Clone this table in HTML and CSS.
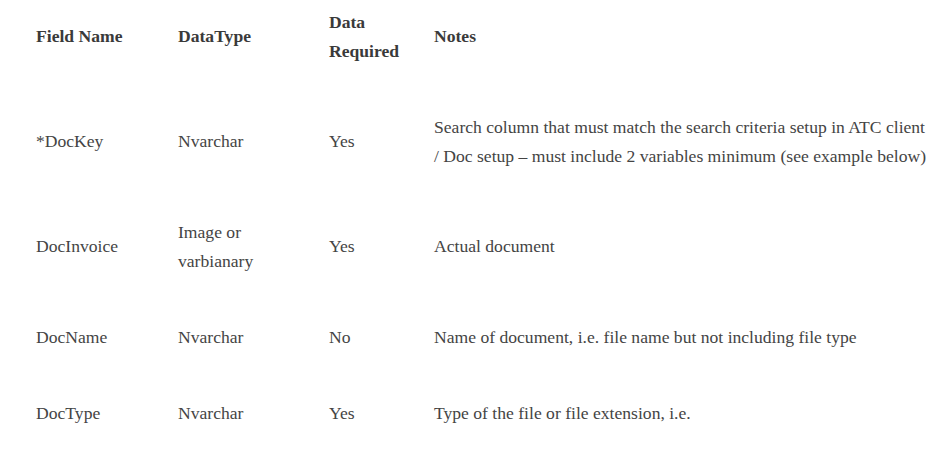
FILE: index.html
```html
<!DOCTYPE html>
<html>
<head>
<meta charset="utf-8">
<link rel="stylesheet" href="styles.css">
</head>
<body class="page">
<div class="fields">
  <div class="cell head">Field Name</div>
  <div class="cell head">DataType</div>
  <div class="cell head">Data Required</div>
  <div class="cell head">Notes</div>

  <div class="cell">*DocKey</div>
  <div class="cell">Nvarchar</div>
  <div class="cell">Yes</div>
  <div class="cell">Search column that must match the search criteria setup in ATC client / Doc setup – must include 2 variables minimum (see example below)</div>

  <div class="cell">DocInvoice</div>
  <div class="cell">Image or varbianary</div>
  <div class="cell">Yes</div>
  <div class="cell">Actual document</div>

  <div class="cell">DocName</div>
  <div class="cell">Nvarchar</div>
  <div class="cell">No</div>
  <div class="cell">Name of document, i.e. file name but not including file type</div>

  <div class="cell">DocType</div>
  <div class="cell">Nvarchar</div>
  <div class="cell">Yes</div>
  <div class="cell">Type of the file or file extension, i.e.</div>
</div>
</body>
</html>
```
FILE: styles.css
```css
.page {
  margin: 0;
  padding: 0;
  background: #ffffff;
  font-family: "Liberation Serif", "Times New Roman", serif;
  font-size: 17.6px;
  line-height: 29px;
  color: #444444;
}
.fields {
  display: grid;
  grid-template-columns: 142px 151px 105px 518px;
  align-items: center;
  margin-left: 24px;
}
.cell {
  padding: 23.5px 12px;
}
.head {
  font-weight: bold;
  color: #3a3a3a;
  padding-top: 7.5px;
}
```
